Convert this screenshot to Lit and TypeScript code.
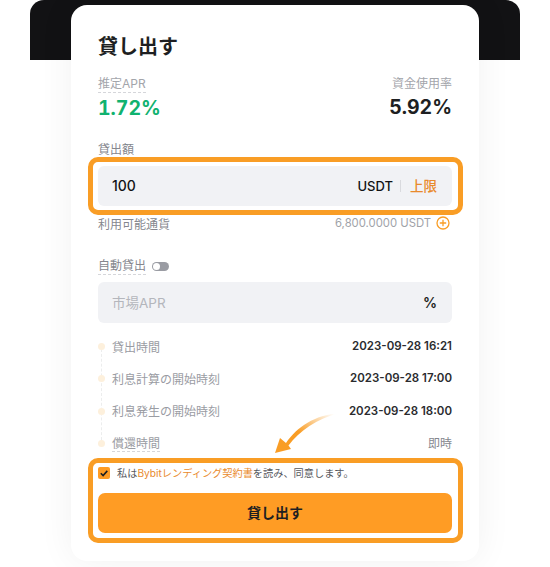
import { LitElement, html, css } from "lit";
import { customElement } from "lit/decorators.js";

@customElement("app-root")
export class AppRoot extends LitElement {
  static styles = css`
    :host {
      display: block;
      width: 550px;
      height: 567px;
      overflow: hidden;
      background: #fff;
      font-family: Inter, "Noto Sans CJK JP", sans-serif;
      color: #121214;
    }
    .stage { position: relative; width: 550px; height: 567px; overflow: hidden; }
    .backdrop {
      position: absolute; left: 30px; top: 0; width: 490px; height: 60px;
      background: #121214; border-radius: 14px 14px 0 0;
    }
    .card {
      position: relative;
      box-sizing: border-box;
      margin: 5px 0 0 71px;
      width: 408px;
      height: 556px;
      padding: 0 27px;
      background: #fff;
      border-radius: 16px;
      box-shadow: 0 0 36px rgba(0, 0, 0, 0.06);
      display: flex;
      flex-direction: column;
    }
    h1 { margin: 27px 0 0; height: 30px; line-height: 30px; font-size: 20px; font-weight: 700; color: #1e1f22; }
    .stats { display: flex; justify-content: space-between; margin-top: 14px; }
    .stat { display: flex; flex-direction: column; align-items: flex-start; }
    .stat.right { align-items: flex-end; }
    .lbl { font-size: 12px; line-height: 16px; color: #a3a5ab; }
    .dash { border-bottom: 1px dashed #d5d6da; }
    .val { margin-top: 2px; font-size: 19.5px; line-height: 26px; font-weight: 700; color: #1e1f22; font-variant-numeric: tabular-nums; }
    .val.green { color: #10b26f; }
    .field-label { margin-top: 21px; font-size: 12px; line-height: 16px; color: #85878e; }
    .input {
      box-sizing: border-box; display: flex; align-items: center; height: 40px; margin-top: 8px;
      padding: 0 15px 0 14px; border-radius: 6px; background: #f1f2f5; font-size: 14px; line-height: 20px;
    }
    .input .amount { flex: 1; font-weight: 500; }
    .unit { font-weight: 500; font-size: 13px; }
    .sep { width: 1px; height: 12px; background: #d9dade; margin: 0 9px 0 7px; }
    .max { color: #e98a2c; font-weight: 500; font-size: 13.5px; }
    .avail { display: flex; justify-content: space-between; align-items: center; margin-top: 9px; height: 16px; font-size: 12px; color: #85878e; }
    .avail .amt { display: flex; align-items: center; gap: 5px; margin-right: 2px; color: #a0a2a8; font-size: 11.3px; }
    .auto { display: flex; align-items: center; gap: 6px; margin-top: 27px; height: 17px; }
    .auto .lbl { color: #85878e; }
    .toggle { position: relative; width: 17px; height: 9px; border-radius: 5px; background: #9a9ca3; }
    .toggle::after {
      content: ""; position: absolute; left: 1px; top: 1px; width: 7px; height: 7px;
      border-radius: 50%; background: #fff;
    }
    .input.second { margin-top: 7px; height: 41px; }
    .input.second .amount { color: #b4b6bc; font-weight: 400; font-size: 13.5px; }
    .input.second .pct { font-weight: 600; font-size: 14px; color: #1e1f22; }
    .timeline { position: relative; margin-top: 14px; display: flex; flex-direction: column; gap: 14.33px; }
    .timeline::before {
      content: ""; position: absolute; left: 3px; top: 12px; bottom: 12px;
      border-left: 1px dashed #eceded;
    }
    .row { position: relative; display: flex; justify-content: space-between; align-items: center; height: 18px; padding-left: 14px; font-size: 12px; color: #9a9ca3; }
    .row::before {
      content: ""; position: absolute; left: 0; top: 6px; width: 7px; height: 7px; border-radius: 50%; background: #fdf0dc;
    }
    .row b { font-weight: 600; color: #2a2b2e; font-size: 11.5px; }
    .row b.plain { font-weight: 400; color: #85878e; font-size: 12px; }
    .agree { display: flex; align-items: center; gap: 7px; margin-top: 13px; height: 16px; font-size: 10.2px; color: #55575c; white-space: nowrap; }
    .check {
      width: 12px; height: 12px; border-radius: 2px; background: #ff9c24; display: flex; align-items: center; justify-content: center; flex: none;
    }
    .link { color: #e98a2c; }
    button {
      margin-top: 12px; height: 40px; border: 0; padding: 0 0 2px; border-radius: 7px; background: #ff9c24; color: #1e1f22;
      font: 700 14px Inter, "Noto Sans CJK JP", sans-serif;
    }
    .hl { position: absolute; box-sizing: border-box; border: 5px solid #f99d25; border-radius: 10px; pointer-events: none; }
    .hl.one { left: 16.5px; top: 151.5px; width: 375.5px; height: 58.5px; }
    .hl.two { left: 16.5px; top: 452.5px; width: 375px; height: 85px; }
    .arrow { position: absolute; left: 202px; top: 405px; }
  `;

  render() {
    return html`
      <div class="stage">
        <div class="backdrop"></div>
        <div class="card">
          <h1>貸し出す</h1>
          <div class="stats">
            <div class="stat">
              <span class="lbl dash">推定APR</span>
              <span class="val green">1.72%</span>
            </div>
            <div class="stat right">
              <span class="lbl">資金使用率</span>
              <span class="val">5.92%</span>
            </div>
          </div>
          <div class="field-label">貸出額</div>
          <div class="input">
            <span class="amount">100</span>
            <span class="unit">USDT</span><span class="sep"></span><span class="max">上限</span>
          </div>
          <div class="avail">
            <span>利用可能通貨</span>
            <span class="amt">6,800.0000 USDT
              <svg width="14" height="14" viewBox="0 0 14 14" fill="none" stroke="#f99d25" stroke-width="1.3">
                <circle cx="7" cy="7" r="6"></circle><path d="M7 3.8v6.4M3.8 7h6.4"></path>
              </svg>
            </span>
          </div>
          <div class="auto"><span class="lbl dash">自動貸出</span><span class="toggle"></span></div>
          <div class="input second"><span class="amount">市場APR</span><span class="pct">%</span></div>
          <div class="timeline">
            <div class="row"><span>貸出時間</span><b>2023-09-28 16:21</b></div>
            <div class="row"><span>利息計算の開始時刻</span><b>2023-09-28 17:00</b></div>
            <div class="row"><span>利息発生の開始時刻</span><b>2023-09-28 18:00</b></div>
            <div class="row"><span class="dash">償還時間</span><b class="plain">即時</b></div>
          </div>
          <div class="agree">
            <span class="check">
              <svg width="10" height="10" viewBox="0 0 10 10" fill="none" stroke="#1e1f22" stroke-width="1.6"><path d="M1.8 5.2l2.3 2.3 4.2-4.6"></path></svg>
            </span>
            <span>私は<span class="link">Bybitレンディング契約書</span>を読み、同意します。</span>
          </div>
          <button>貸し出す</button>
          <div class="hl one"></div>
          <div class="hl two"></div>
          <svg class="arrow" width="68" height="46" viewBox="0 0 68 46">
            <defs>
              <linearGradient id="ag" x1="1" y1="0" x2="0" y2="1">
                <stop offset="0.05" stop-color="#f99d25" stop-opacity="0"></stop>
                <stop offset="0.55" stop-color="#f99d25"></stop>
              </linearGradient>
            </defs>
            <path d="M66 3C42 5 24 17 13 33L7 28L2 43L18 39L15.5 35.5C26 21 44 9 66 3Z" fill="url(#ag)"></path>
          </svg>
        </div>
      </div>
    `;
  }
}
